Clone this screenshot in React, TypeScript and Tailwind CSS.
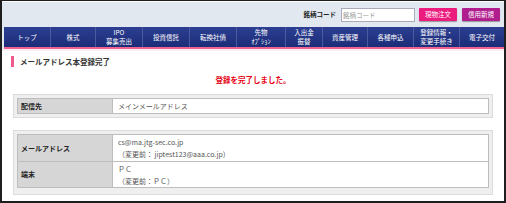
const navItems: string[][] = [
  ['トップ'],
  ['株式'],
  ['IPO', '募集売出'],
  ['投資信託'],
  ['転換社債'],
  ['先物', 'ｵﾌﾟｼｮﾝ'],
  ['入出金', '振替'],
  ['資産管理'],
  ['各種申込'],
  ['登録情報・', '変更手続き'],
  ['電子交付'],
];

const navWidths = [
  'w-[46px]',
  'w-[45px]',
  'w-[47px]',
  'w-[47px]',
  'w-[47px]',
  'w-[49px]',
  'w-[37px]',
  'w-[45px]',
  'w-[46px]',
  'w-[46px]',
  'w-[45px]',
];

function InfoTable({ rows, pb }: { rows: { label: string; lines: string[]; h: string }[]; pb: string }) {
  return (
    <div className={`mx-[11px] bg-[#efefef] border border-[#dcdcdc] px-[3px] pt-[3px] ${pb}`}>
      <div className="border border-[#bdbdbd] bg-white">
        {rows.map((row, i) => (
          <div
            key={row.label}
            className={`flex ${row.h} ${i > 0 ? 'border-t border-[#bdbdbd]' : ''}`}
          >
            <div className="w-[95px] shrink-0 bg-[#d6d6d6] border-r border-[#bdbdbd] flex items-center pl-[3px] text-[7px] font-bold text-[#222]">
              {row.label}
            </div>
            <div className="flex flex-col justify-center pl-[5px] text-[7px] leading-[12px] text-[#555]">
              {row.lines.map((l) => (
                <span key={l}>{l}</span>
              ))}
            </div>
          </div>
        ))}
      </div>
    </div>
  );
}

export default function App() {
  return (
    <div
      className="w-[506px] h-[203px] bg-white border-t border-l-2 border-r-2 border-b-2 border-[#1e1e1e] overflow-hidden"
      style={{ fontFamily: '"Noto Sans CJK JP", "Noto Sans", sans-serif' }}
    >
      {/* header band */}
      <div className="h-[26px] bg-[#e1e8ef] border-t border-white flex items-center justify-end pr-[4px] gap-[3px]">
        <span className="text-[6.5px] font-bold text-[#222] mr-[2px]">銘柄コード</span>
        <input
          placeholder="銘柄コード"
          className="w-[74px] h-[14px] bg-white border border-[#aab] px-[1px] text-[6.5px] placeholder:text-[#999] outline-none"
        />
        <button className="w-[38px] h-[13px] ml-[1px] bg-[#ec1b7e] text-white text-[6.5px] rounded-[1px] shadow-[0_1px_1px_rgba(0,0,0,0.35)]">
          現物注文
        </button>
        <button className="w-[38px] h-[13px] ml-[2px] bg-[#b01e8e] text-white text-[6.5px] rounded-[1px] shadow-[0_1px_1px_rgba(0,0,0,0.35)]">
          信用新規
        </button>
      </div>

      {/* nav */}
      <div className="pl-[2px] bg-[#e1e8ef]">
        <div className="flex h-[22px] bg-gradient-to-b from-[#2c3f92] to-[#1c2c78] border-b-2 border-[#f0628f]">
          {navItems.map((item, i) => (
            <div
              key={i}
              className={`${navWidths[i]} flex flex-col items-center justify-center text-white text-[6.5px] leading-[9px] ${i > 0 ? 'border-l border-[#4a5a9e]' : ''}`}
            >
              {item.map((t) => (
                <span key={t}>{t}</span>
              ))}
            </div>
          ))}
        </div>
      </div>
      <div className="h-[2px] bg-[#fbeef2]" />

      {/* title */}
      <div className="flex items-center mt-[5px] ml-[9px] h-[11px]">
        <div className="w-[3px] h-[11px] bg-[#ef5b8c]" />
        <span className="ml-[6px] text-[7.5px] font-bold text-[#333]">メールアドレス本登録完了</span>
      </div>

      <div className="mt-[7px] h-[11px] leading-[11px] text-center text-[7.5px] font-bold text-[#e60012]">
        登録を完了しました。
      </div>

      <div className="mt-[9px]">
        <InfoTable pb="pb-[3px]" rows={[{ label: '配信先', lines: ['メインメールアドレス'], h: 'h-[14px]' }]} />
      </div>

      <div className="mt-[12px]">
        <InfoTable
          pb="pb-[6px]"
          rows={[
            {
              label: 'メールアドレス',
              lines: ['cs@ma.jtg-sec.co.jp', '（変更前： jiptest123@aaa.co.jp）'],
              h: 'h-[26px]',
            },
            { label: '端末', lines: ['ＰＣ', '（変更前：ＰＣ）'], h: 'h-[26px]' },
          ]}
        />
      </div>
    </div>
  );
}
